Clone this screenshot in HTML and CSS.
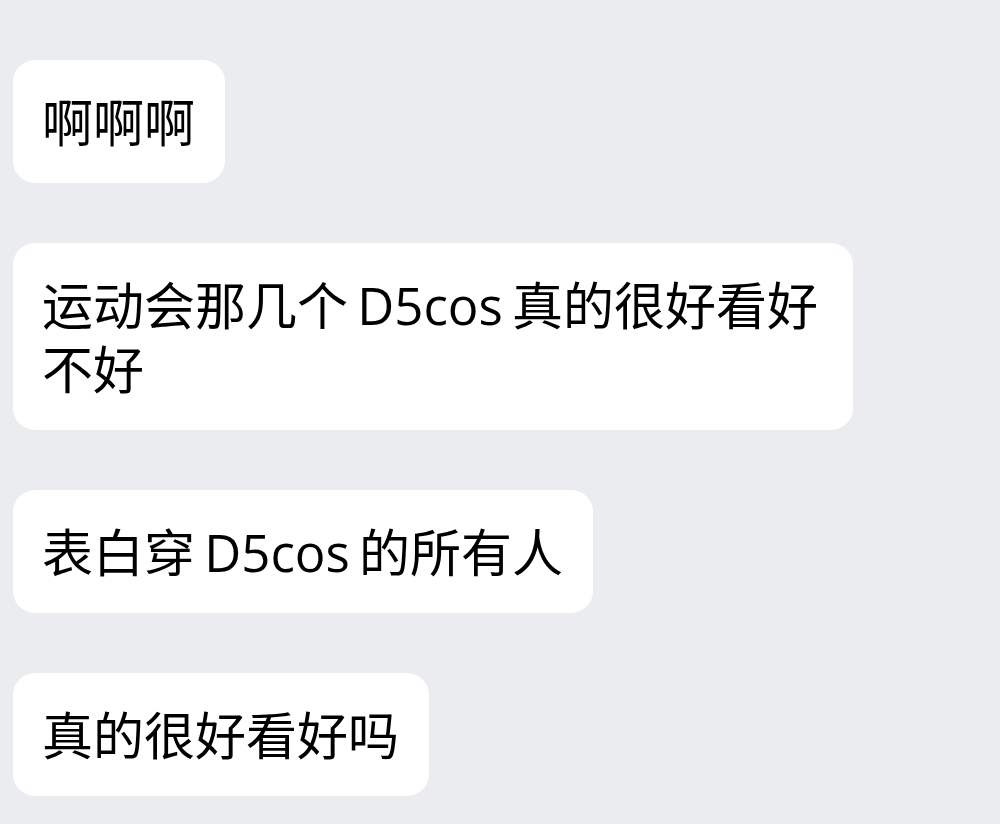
FILE: index.html
```html
<!DOCTYPE html>
<html lang="zh-CN">
<head>
<meta charset="utf-8">
<title>Chat</title>
<link rel="stylesheet" href="styles.css">
</head>
<body>
<main class="chat">
  <div class="bubble">啊啊啊</div>
  <div class="bubble">运动会那几个 D5cos 真的很好看好不好</div>
  <div class="bubble">表白穿 D5cos 的所有人</div>
  <div class="bubble">真的很好看好吗</div>
</main>
</body>
</html>
```
FILE: styles.css
```css
html, body {
  margin: 0;
  padding: 0;
  background: #ebecf0;
}
body {
  width: 1000px;
  height: 824px;
  overflow: hidden;
}
.chat {
  display: flex;
  flex-direction: column;
  align-items: flex-start;
  gap: 60px;
  padding: 60px 0 0 13px;
}
.bubble {
  box-sizing: border-box;
  background: #ffffff;
  border-radius: 22px;
  padding: 29.5px 30px 29.5px 29px;
  max-width: 840px;
  font-family: "Open Sans", "Noto Sans CJK SC", sans-serif;
  font-size: 51px;
  line-height: 64px;
  word-spacing: -4px;
  color: #000;
}
```
